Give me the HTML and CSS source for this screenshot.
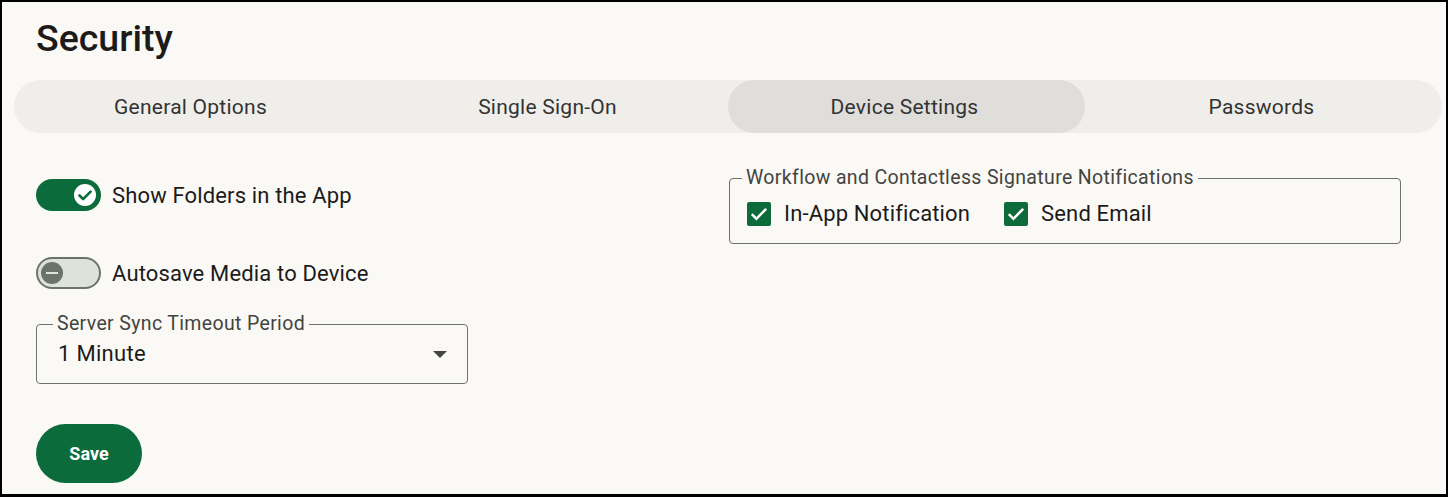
FILE: index.html
```html
<!DOCTYPE html>
<html lang="en">
<head>
  <meta charset="UTF-8" />
  <meta name="viewport" content="width=device-width, initial-scale=1.0"/>
  <title>Security</title>
  <link rel="stylesheet" href="styles.css">
</head>
<body>
  <div class="frame">
    <h1 class="title">Security</h1>

    <nav class="tabs">
      <button class="tab">General Options</button>
      <button class="tab">Single Sign-On</button>
      <button class="tab active">Device Settings</button>
      <button class="tab">Passwords</button>
    </nav>

    <div class="content">
      <div class="col-left">
        <label class="switch-row">
          <span class="switch on">
            <span class="thumb">
              <svg width="22" height="22" viewBox="0 0 22 22">
                <path d="M5.5 11.5l3.6 3.6L16.6 7.6" fill="none" stroke="#0c6b3a" stroke-width="2.6" stroke-linecap="round" stroke-linejoin="round"/>
              </svg>
            </span>
          </span>
          <span class="switch-label">Show Folders in the App</span>
        </label>

        <label class="switch-row">
          <span class="switch off">
            <span class="thumb">
              <span class="minus"></span>
            </span>
          </span>
          <span class="switch-label">Autosave Media to Device</span>
        </label>

        <fieldset class="outlined select">
          <legend>Server Sync Timeout Period</legend>
          <div class="select-value">
            <span>1 Minute</span>
            <span class="arrow"></span>
          </div>
        </fieldset>

        <button class="save">Save</button>
      </div>

      <div class="col-right">
        <fieldset class="outlined notify">
          <legend>Workflow and Contactless Signature Notifications</legend>
          <div class="checks">
            <label class="check-row">
              <span class="checkbox">
                <svg width="24" height="24" viewBox="0 0 24 24">
                  <path d="M4.8 12.2l4.6 4.6L19.2 6.8" fill="none" stroke="#fff" stroke-width="2.5"/>
                </svg>
              </span>
              In-App Notification
            </label>
            <label class="check-row">
              <span class="checkbox">
                <svg width="24" height="24" viewBox="0 0 24 24">
                  <path d="M4.8 12.2l4.6 4.6L19.2 6.8" fill="none" stroke="#fff" stroke-width="2.5"/>
                </svg>
              </span>
              Send Email
            </label>
          </div>
        </fieldset>
      </div>
    </div>
  </div>
</body>
</html>
```

FILE: styles.css
```css
* {
  box-sizing: border-box;
}
body {
  margin: 0;
  font-family: Roboto, "Liberation Sans", Arial, sans-serif;
  color: #1c1b1a;
}
.frame {
  height: 497px;
  border: 2px solid #000;
  border-bottom-width: 3px;
  padding: 15px 4px 0 12px;
  background-color: #faf9f6;
  overflow: hidden;
}
.title {
  margin: 0 0 21px 22px;
  font-size: 37.5px;
  line-height: 42px;
  font-weight: 500;
  color: #1c1b1a;
}
.tabs {
  display: grid;
  grid-template-columns: repeat(4, 1fr);
  height: 53px;
  border-radius: 27px;
  background-color: #efeeea;
}
.tab {
  border: 0;
  background: none;
  border-radius: 27px;
  padding: 0 4px 0 0;
  font-family: inherit;
  font-size: 21px;
  letter-spacing: 0.25px;
  color: #333;
  cursor: pointer;
}
.tab.active {
  background-color: #dfdeda;
}
.content {
  display: grid;
  grid-template-columns: 1fr 1fr;
}
.col-left {
  padding-left: 22px;
  display: flex;
  flex-direction: column;
  align-items: flex-start;
}
.col-right {
  padding: 35px 41px 0 1px;
}
.switch-row {
  display: flex;
  align-items: center;
  gap: 11px;
  margin-top: 46px;
  font-size: 22px;
  letter-spacing: 0.15px;
}
.switch {
  width: 65px;
  height: 32px;
  border-radius: 16px;
  display: flex;
  align-items: center;
  padding: 0 5px;
}
.switch.on {
  background-color: #0c6b3a;
  justify-content: flex-end;
}
.switch.off {
  background-color: #dde3da;
  border: 2px solid #6c7469;
  padding: 0 3px;
}
.thumb {
  width: 22px;
  height: 22px;
  border-radius: 50%;
  display: flex;
  align-items: center;
  justify-content: center;
}
.switch.on .thumb {
  background-color: #fff;
}
.switch.off .thumb {
  background-color: #6c7469;
}
.minus {
  width: 12px;
  height: 2.5px;
  background-color: #dde3da;
}
.outlined {
  margin: 0;
  min-width: 0;
  border: 1px solid #6f716d;
  border-radius: 4px;
}
.outlined legend {
  margin-left: -5px;
  padding: 0 4px;
  font-size: 19.5px;
  line-height: 20px;
  letter-spacing: 0.35px;
  color: #44443f;
}
.select {
  margin-top: 25px;
  width: 432px;
  padding: 7px 20px 16px 21px;
}
.select-value {
  display: flex;
  align-items: center;
  justify-content: space-between;
  font-size: 22px;
  line-height: 26px;
  letter-spacing: 0.3px;
}
.arrow {
  width: 0;
  height: 0;
  border-left: 7px solid transparent;
  border-right: 7px solid transparent;
  border-top: 7px solid #444;
}
.save {
  margin-top: 40px;
  width: 106px;
  height: 59px;
  border: 0;
  border-radius: 30px;
  background-color: #0c6b3a;
  color: #fff;
  font-family: inherit;
  font-size: 18px;
  font-weight: 700;
  cursor: pointer;
}
.notify {
  padding: 14px 17px 17px 17px;
}
.checks {
  display: flex;
  gap: 34px;
}
.check-row {
  display: flex;
  align-items: center;
  gap: 13px;
  font-size: 22px;
  line-height: 24px;
  letter-spacing: 0.15px;
}
.checkbox {
  width: 24px;
  height: 24px;
  border-radius: 2px;
  background-color: #0c6b3a;
  display: flex;
}
```
